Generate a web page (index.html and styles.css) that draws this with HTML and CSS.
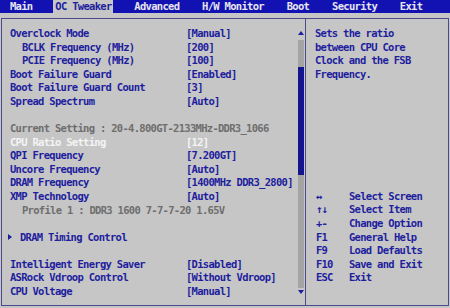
FILE: index.html
```html
<!DOCTYPE html>
<html>
<head>
<meta charset="utf-8">
<link rel="stylesheet" href="styles.css">
</head>
<body>
<div class="topbar">
  <span class="tab">Main</span>
  <span class="tab active">OC Tweaker</span>
  <span class="tab">Advanced</span>
  <span class="tab">H/W Monitor</span>
  <span class="tab">Boot</span>
  <span class="tab">Security</span>
  <span class="tab">Exit</span>
</div>
<div class="frame">
  <div class="left">
    <div class="list">
      <div class="row"><span>Overclock Mode</span><span>[Manual]</span></div>
      <div class="row sub"><span>BCLK Frequency (MHz)</span><span>[200]</span></div>
      <div class="row sub"><span>PCIE Frequency (MHz)</span><span>[100]</span></div>
      <div class="row"><span>Boot Failure Guard</span><span>[Enabled]</span></div>
      <div class="row"><span>Boot Failure Guard Count</span><span>[3]</span></div>
      <div class="row"><span>Spread Spectrum</span><span>[Auto]</span></div>
      <div class="row"></div>
      <div class="row info">Current Setting : 20-4.800GT-2133MHz-DDR3_1066</div>
      <div class="row sel"><span>CPU Ratio Setting</span><span>[12]</span></div>
      <div class="row"><span>QPI Frequency</span><span>[7.200GT]</span></div>
      <div class="row"><span>Uncore Frequency</span><span>[Auto]</span></div>
      <div class="row"><span>DRAM Frequency</span><span>[1400MHz DDR3_2800]</span></div>
      <div class="row"><span>XMP Technology</span><span>[Auto]</span></div>
      <div class="row info sub">Profile 1 : DDR3 1600 7-7-7-20 1.65V</div>
      <div class="row"></div>
      <div class="row menu"><span class="tri"></span><span>DRAM Timing Control</span></div>
      <div class="row"></div>
      <div class="row"><span>Intelligent Energy Saver</span><span>[Disabled]</span></div>
      <div class="row"><span>ASRock Vdroop Control</span><span>[Without Vdroop]</span></div>
      <div class="row"><span>CPU Voltage</span><span>[Manual]</span></div>
    </div>
    <div class="scroll">
      <span class="up"></span>
      <div class="track"><div class="thumb"></div></div>
      <span class="down"></span>
    </div>
  </div>
  <div class="right">
    <div class="help">Sets the ratio<br>between CPU Core<br>Clock and the FSB<br>Frequency.</div>
    <div class="keys">
      <span class="k">↔</span><span>Select Screen</span>
      <span class="k">↑↓</span><span>Select Item</span>
      <span class="k">+-</span><span>Change Option</span>
      <span class="k">F1</span><span>General Help</span>
      <span class="k">F9</span><span>Load Defaults</span>
      <span class="k">F10</span><span>Save and Exit</span>
      <span class="k">ESC</span><span>Exit</span>
    </div>
  </div>
</div>
</body>
</html>
```
FILE: styles.css
```css
html, body {
  margin: 0;
  padding: 0;
  background: #c6c6c6;
  width: 450px;
  height: 308px;
  overflow: hidden;
  font-family: "DejaVu Sans Mono", "Liberation Mono", monospace;
  font-weight: bold;
  font-size: 10.5px;
  letter-spacing: -0.7px;
  color: #1e1e9e;
}
.topbar {
  height: 13px;
  background: #1212b2;
  display: flex;
  gap: 19.8px;
  padding-left: 8px;
  line-height: 13px;
}
.tab {
  padding: 0 1px 0 2px;
  color: #e6e6ee;
}
.tab.active {
  background: #c6c6c6;
  color: #1e1e9e;
}
.frame {
  margin: 5px 1px 0 1px;
  height: 286px;
  border: 1px solid #4a4a8c;
  display: flex;
}
.left {
  width: 303px;
  display: flex;
}
.list {
  flex: 1;
  padding: 8px 0 0 8px;
}
.row {
  display: grid;
  grid-template-columns: 176px 1fr;
  height: 13.58px;
  line-height: 13.58px;
  white-space: nowrap;
}
.row.sub span:first-child { padding-left: 12px; }
.row.info {
  display: block;
  color: #6e6e6e;
}
.row.info.sub { padding-left: 12px; }
.row.sel { color: #f4f4f4; }
.row.menu {
  display: flex;
  align-items: center;
}
.tri {
  width: 0;
  height: 0;
  border-left: 4px solid #1e1e9e;
  border-top: 3px solid transparent;
  border-bottom: 3px solid transparent;
  margin: 0 8px 0 -2px;
}
.scroll {
  width: 6px;
  margin-right: 1px;
  display: flex;
  flex-direction: column;
  align-items: center;
  padding: 12px 0 11px;
}
.up, .down {
  width: 0;
  height: 0;
  border-left: 3px solid transparent;
  border-right: 3px solid transparent;
}
.up { border-bottom: 4px solid #1e1e9e; margin-bottom: 5px; }
.down { border-top: 4px solid #1e1e9e; margin-top: 2px; }
.track {
  flex: 1;
  width: 6px;
  background: #a4a4a4;
}
.thumb {
  margin-top: 27px;
  height: 108px;
  background: #14148e;
}
.right {
  flex: 1;
  border-left: 1px solid #4a4a8c;
  padding: 8px 0 0 9px;
  line-height: 13.58px;
}
.keys {
  margin-top: 108.6px;
  padding-left: 1px;
  display: grid;
  grid-template-columns: 33px 1fr;
  grid-auto-rows: 13.58px;
}
.k { letter-spacing: -0.8px; }
```
